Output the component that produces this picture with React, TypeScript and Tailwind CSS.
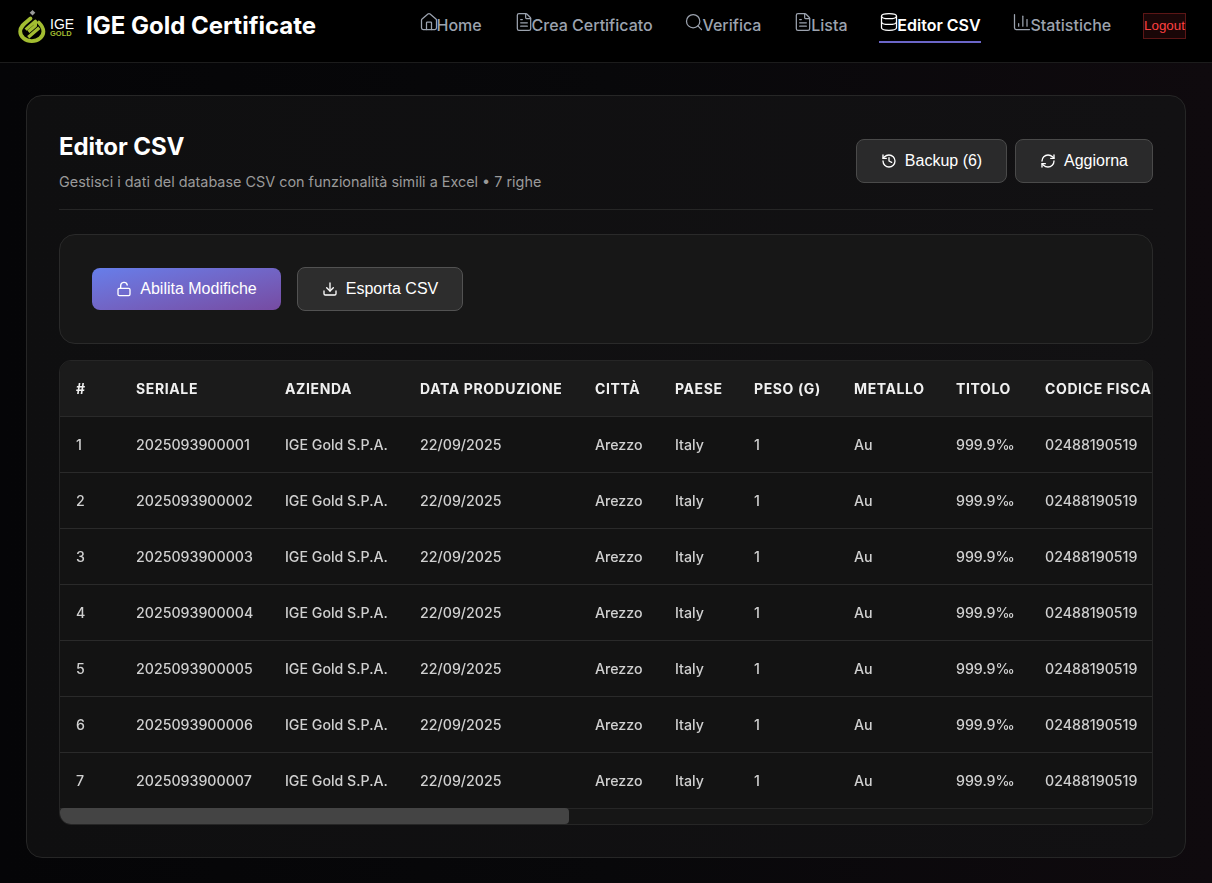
import React from 'react';
import { House, FileText, Search, Database, ChartColumn, History, RefreshCw, LockOpen, Download } from 'lucide-react';

const navItems = [
  { label: 'Home', icon: House },
  { label: 'Crea Certificato', icon: FileText },
  { label: 'Verifica', icon: Search },
  { label: 'Lista', icon: FileText },
  { label: 'Editor CSV', icon: Database, active: true },
  { label: 'Statistiche', icon: ChartColumn },
];

const columns = [
  { label: '#', width: 'w-[60px]' },
  { label: 'Seriale', width: 'w-[149px]' },
  { label: 'Azienda', width: 'w-[135px]' },
  { label: 'Data Produzione', width: 'w-[175px]' },
  { label: 'Città', width: 'w-[80px]' },
  { label: 'Paese', width: 'w-[79px]' },
  { label: 'Peso (g)', width: 'w-[100px]' },
  { label: 'Metallo', width: 'w-[102px]' },
  { label: 'Titolo', width: 'w-[89px]' },
  { label: 'Codice Fiscale', width: 'w-[1378px]' },
];

const rows = [1, 2, 3, 4, 5, 6, 7];

const Logo = () => (
  <div className="flex items-center gap-[4px] w-[56px] shrink-0">
    <svg width="28" height="34" viewBox="0 0 28 34" fill="none" className="shrink-0">
      <path d="M14.5 1l2.8 2.8-2.8 2.8-2.8-2.8z" fill="#9a9a9a" />
      <path
        d="M12.5 9.5C8 13.5 2.2 16.5 2.2 22.5a11.6 9.6 0 0 0 23.2 0c0-3.6-2-6.4-4.6-9"
        stroke="#a3bd31"
        strokeWidth="3.8"
        strokeLinecap="round"
      />
      <path d="M7.6 20.6l9.8-8.4v4.6l-7 6" stroke="#a3bd31" strokeWidth="3.2" strokeLinejoin="round" />
      <path d="M11.5 27.2l8.5-7.4" stroke="#a3bd31" strokeWidth="3.4" strokeLinecap="square" />
    </svg>
    <div className="flex flex-col font-['Liberation_Sans',sans-serif] mt-[2px]">
      <span className="block text-[14px] leading-[12px] text-white">IGE</span>
      <span className="block text-[7.5px] leading-[7px] font-bold text-[#a3bd31]">GOLD</span>
    </div>
  </div>
);

export default function App() {
  return (
    <div className="min-h-[883px] bg-gradient-to-r from-[#050507] via-[#08080a] to-[#0f0a0e] font-['Inter',sans-serif] text-white overflow-hidden">
      <header className="h-[63px] bg-black border-b border-[#1c1c1c] flex items-start justify-between pl-[18px] pr-[26px]">
        <div className="flex items-center gap-[12px] h-[52px]">
          <Logo />
          <span className="text-[24px] font-bold">IGE Gold Certificate</span>
        </div>
        <nav className="flex items-start gap-[31.8px] pt-[13px]">
          {navItems.map(({ label, icon: Icon, active }) => (
            <a
              key={label}
              className={`flex items-start h-[30px] border-b-2 text-[16px] font-medium ${
                active ? 'text-white border-[#6b66c9] font-semibold' : 'text-[#9ca3af] border-transparent'
              }`}
            >
              <Icon size={20} strokeWidth={1.5} className="-mt-[1px] -mr-[2px]" />
              <span className="mt-[3px] leading-[19px]">{label}</span>
            </a>
          ))}
          <button className="h-[26px] w-[43px] border border-[#5c1616] bg-[#190607] text-[#ff4040] text-[13.33px] font-['Liberation_Sans',sans-serif] whitespace-nowrap">
            Logout
          </button>
        </nav>
      </header>

      <main className="px-[26px] pt-[32px]">
        <section className="h-[763px] rounded-[16px] border border-[#262626] bg-gradient-to-r from-[#0f0f10] to-[#121113] px-[32px] pt-[32px]">
          <div className="flex items-start justify-between h-[82px] border-b border-[#262626]">
            <div>
              <h1 className="mt-[1px] text-[24px] font-bold leading-[36px] tracking-[-0.1px]">Editor CSV</h1>
              <p className="mt-[7px] text-[14.4px] leading-[20px] text-[#9a9a9a]">
                Gestisci i dati del database CSV con funzionalità simili a Excel • 7 righe
              </p>
            </div>
            <div className="flex gap-[8px] mt-[11px] font-['Liberation_Sans',sans-serif]">
              <button className="flex items-center justify-center gap-[8px] w-[151px] h-[44px] rounded-[8px] border border-[#4a4a4a] bg-[#2a2a2b] text-[16px]">
                <History size={16} />
                Backup (6)
              </button>
              <button className="flex items-center justify-center gap-[8px] w-[138px] h-[44px] rounded-[8px] border border-[#4a4a4a] bg-[#2a2a2b] text-[16px]">
                <RefreshCw size={16} />
                Aggiorna
              </button>
            </div>
          </div>

          <div className="mt-[24px] h-[110px] rounded-[16px] border border-[#2a2a2a] bg-[#171717] flex items-center gap-[16px] px-[32px] font-['Liberation_Sans',sans-serif]">
            <button className="flex items-center justify-center gap-[8px] w-[189px] h-[42px] rounded-[8px] bg-gradient-to-br from-[#667eea] to-[#764ba2] text-[16px]">
              <LockOpen size={16} />
              Abilita Modifiche
            </button>
            <button className="flex items-center justify-center gap-[8px] w-[166px] h-[44px] rounded-[8px] border border-[#525252] bg-[#2d2d2d] text-[16px]">
              <Download size={16} />
              Esporta CSV
            </button>
          </div>

          <div className="mt-[16px] h-[465px] rounded-[12px] border border-[#262626] bg-[#131313] overflow-hidden flex flex-col">
            <div className="h-[447px] overflow-hidden [will-change:transform]">
              <table className="table-fixed w-[2347px] border-collapse text-left">
                <thead>
                  <tr className="h-[55px] bg-[#1b1b1b] border-b border-[#2a2a2a]">
                    {columns.map((col) => (
                      <th
                        key={col.label}
                        className={`${col.width} pl-[16px] text-[14px] font-bold uppercase tracking-[0.62px] text-[#f0f0f0] whitespace-nowrap`}
                      >
                        {col.label}
                      </th>
                    ))}
                  </tr>
                </thead>
                <tbody>
                  {rows.map((n) => (
                    <tr key={n} className="h-[56px] border-b border-[#2a2a2a] text-[14.2px] font-medium text-[#d0d0d0] [&>td]:pl-[16px] [&>td]:pt-[2px]">
                      <td>{n}</td>
                      <td>{`202509390000${n}`}</td>
                      <td className="whitespace-nowrap">IGE Gold S.P.A.</td>
                      <td>22/09/2025</td>
                      <td>Arezzo</td>
                      <td>Italy</td>
                      <td>1</td>
                      <td>Au</td>
                      <td>999.9‰</td>
                      <td>02488190519</td>
                    </tr>
                  ))}
                </tbody>
              </table>
            </div>
            {/* scrollbar, headless chrome hides the real one */}
            <div className="h-[16px] bg-[#161616] border-t border-[#262626]">
              <div className="h-[16px] -mt-[1px] w-[509px] rounded-[4px] bg-[#444444]"></div>
            </div>
          </div>
        </section>
      </main>
    </div>
  );
}
